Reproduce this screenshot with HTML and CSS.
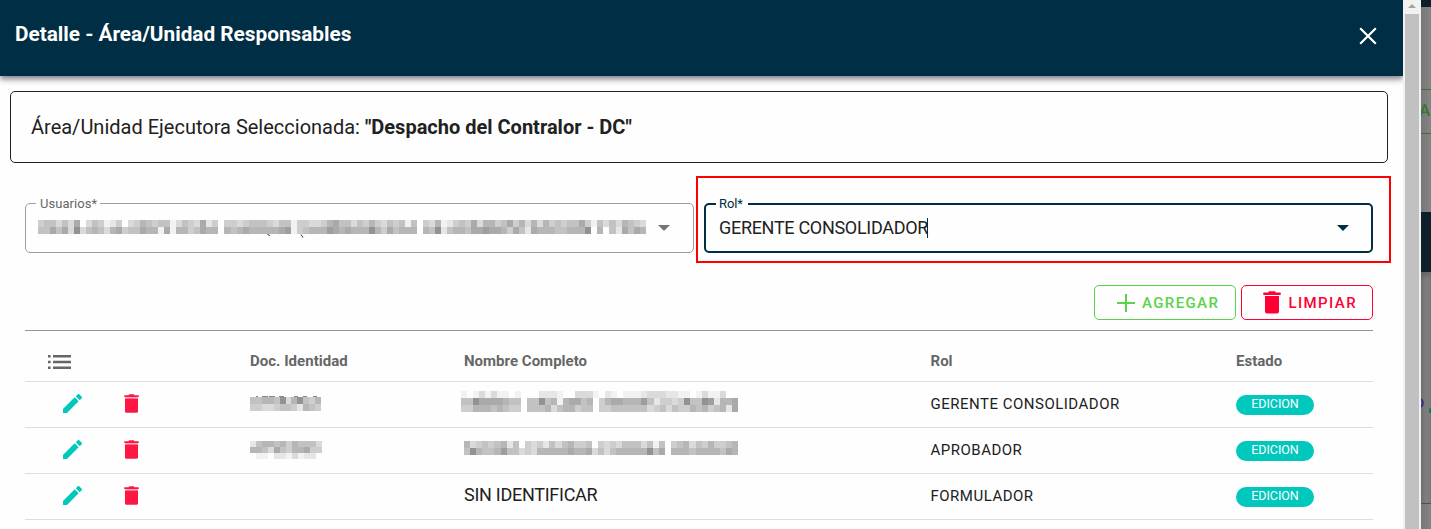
FILE: index.html
```html
<!DOCTYPE html>
<html lang="es">
<head>
<meta charset="utf-8">
<title>Detalle - Área/Unidad Responsables</title>
<link rel="stylesheet" href="styles.css">
</head>
<body>
<svg class="defs" width="0" height="0">
  <symbol id="trash" viewBox="0 0 15 19"><path d="M1 4.600h13v12.600q0 1.600-1.600 1.600H2.600Q1 18.800 1 17.200z"/><path d="M.3 1.200h4.200q.3-1 1.300-1h3.400q1 0 1.300 1h4.200v1.800H.3z"/><path d="M1 3h13v1.600H1z" opacity=".35"/></symbol>
  <symbol id="trash-solid" viewBox="0 0 18 23"><path d="M2 5h14v15.500q0 2-2 2H4q-2 0-2-2z"/><path d="M.3 1.500h4.700l1.200-1.200h5.600L13 1.500h4.700V4H.3z"/></symbol>
  <symbol id="pencil" viewBox="3 3 18 18"><path d="M3 17.250V21h3.750L17.810 9.940l-3.750-3.750L3 17.250zM20.710 7.040a1 1 0 0 0 0-1.410l-2.340-2.340a1 1 0 0 0-1.410 0l-1.830 1.830 3.750 3.750 1.830-1.830z"/></symbol>
</svg>
<div class="page">
  <main class="dialog">
    <header class="bar">
      <h1>Detalle - Área/Unidad Responsables</h1>
      <svg class="close" viewBox="0 0 18 18"><path d="M1.200 1.200l15.600 15.600M16.800 1.200L1.200 16.800"/></svg>
    </header>
    <section class="selected">Área/Unidad Ejecutora Seleccionada:&nbsp;<b>"Despacho del Contralor - DC"</b></section>
    <section class="fields">
      <div class="field">
        <label>Usuarios*</label>
        <div class="mosaic users" data-rows="45535370354124034654551354372404434555435514433467553546435451504361245473664574636364545574153536543,55757393565367455766171664576606567666667814566687676669647566606592566577877647527666556669060527576"></div>
        <svg class="tails" viewBox="0 0 38 4"><path d="M.5.500l2.500 1M34 .500l2 3"/></svg>
        <svg class="caret" viewBox="0 0 12 6"><path d="M0 0h12L6 6z"/></svg>
      </div>
      <div class="field active">
        <label>Rol*</label>
        <span class="value">GERENTE CONSOLIDADOR</span><i class="cursor"></i>
        <svg class="caret" viewBox="0 0 12 6"><path d="M0 0h12L6 6z"/></svg>
        <div class="highlight"></div>
      </div>
    </section>
    <section class="actions">
      <button class="add"><svg viewBox="0 0 18 18"><path d="M9 0v18M0 9h18"/></svg>AGREGAR</button>
      <button class="clear"><svg viewBox="0 0 18 23"><use href="#trash-solid"/></svg>LIMPIAR</button>
    </section>
    <section class="table">
      <div class="row head">
        <svg class="list" viewBox="0 0 23 14"><path d="M0 0h2.600v2.500H0zM5 0h18v2.500H5zM0 5.800h2.600v2.500H0zM5 5.800h18v2.500H5zM0 11.500h2.600V14H0zM5 11.500h18V14H5z"/></svg>
        <span>Doc. Identidad</span><span>Nombre Completo</span><span>Rol</span><span>Estado</span>
      </div>
      <div class="row">
        <span class="tools"><svg class="edit"><use href="#pencil"/></svg><svg class="delete"><use href="#trash"/></svg></span>
        <span class="cell"><span class="mosaic doc" data-rows="556659369546,443345542654"></span><svg class="tops" viewBox="0 0 71 1"><path d="M6 .5h2M12 .5h6M19 .5h6M29 .5h5M44 .5h4M53 .5h4M63 .5h4"/></svg></span>
        <span><span class="mosaic name first" data-rows="1013131101000222100333102101112333221101311300,5597777655055956167756046776668524434955982667,4466656544055563566455044555555345354465645627"></span></span>
        <span>GERENTE CONSOLIDADOR</span><span><em>EDICION</em></span>
      </div>
      <div class="row">
        <span class="tools"><svg class="edit"><use href="#pencil"/></svg><svg class="delete"><use href="#trash"/></svg></span>
        <span><span class="mosaic doc second" data-rows="256656465553,665375466744,011022131220"></span></span>
        <span><span class="mosaic name" data-rows="634545625043425356445043435553515045635464456,596556855343666667667353566666957066656666576"></span></span>
        <span>APROBADOR</span><span><em>EDICION</em></span>
      </div>
      <div class="row">
        <span class="tools"><svg class="edit"><use href="#pencil"/></svg><svg class="delete"><use href="#trash"/></svg></span>
        <span></span><span class="full">SIN IDENTIFICAR</span><span>FORMULADOR</span><span><em>EDICION</em></span>
      </div>
    </section>
  </main>
  <div class="scroll"><svg viewBox="0 0 8 4"><path d="M0 4l4-4 4 4z"/></svg><div class="thumb"></div></div>
  <aside class="behind">
    <div class="navy top"></div>
    <div class="upper"><div class="ghost">A</div></div>
    <div class="navy"></div>
    <div class="lower"><span class="purple">o</span><i class="dot"></i></div>
    <div class="rest"></div>
  </aside>
</div>
<script src="mosaic.js"></script>
</body>
</html>
```
FILE: styles.css
```css
* { box-sizing: border-box; }
body { margin: 0; height: 529px; overflow: hidden; background: #fff; color: #212121; font-family: Roboto, sans-serif; }
svg { display: block; fill: currentColor; }
.defs { position: absolute; }
.page { display: grid; grid-template-columns: 1403px 18px 10px; height: 529px; }
.dialog { height: 529px; overflow: hidden; background: #fefefe; }
.bar { height: 76px; background: #002e44; color: #fff; display: flex; justify-content: space-between; padding: 21px 26px 0 15px; box-shadow: 0 2px 4px -1px #0003, 0 4px 5px #0024, 0 1px 10px #0003; }
.bar h1 { margin: 0; font-size: 20.8px; line-height: 26px; font-weight: 700; letter-spacing: -.02px; }
.close { width: 18px; height: 18px; margin-top: 6px; fill: none; stroke: #fff; stroke-width: 2.2; }
.selected { margin: 15px 15px 0 10px; height: 72px; border: 1px solid #212121; border-radius: 5px; padding-left: 20px; display: flex; align-items: center; font-size: 20px; }
.fields { display: grid; grid-template-columns: 669px 669px; gap: 10px; margin: 40px 0 0 25px; height: 50px; }
.field { position: relative; display: flex; align-items: center; border: 1px solid #9e9e9e; border-radius: 5px; padding: 0 23px 0 12px; }
.field label { position: absolute; left: 10px; top: -8px; background: #fefefe; padding: 0 3px 0 4px; font-size: 13px; line-height: 15px; color: #666; letter-spacing: .04px; }
.field.active { border: 2px solid #002e44; padding-left: 13px; padding-right: 22px; }
.active label { color: #002e44; top: -9px; padding-right: 5px; padding-left: 3px; letter-spacing: -.1px; }
.value { font-size: 18px; letter-spacing: -.3px; line-height: 24px; }
.cursor { width: 1px; height: 20px; background: #002e44; margin-left: -1px; }
.caret { width: 12px; height: 6px; margin-left: auto; color: #757575; }
.active .caret { color: #002e44; }
.tails { position: absolute; left: 241px; top: 30px; width: 38px; height: 4px; fill: none; stroke: #333; }
.highlight { position: absolute; inset: -29px -20px -12px -10px; border: 2px solid #f00; }
.mosaic { display: grid; grid-auto-rows: 7px; }
.mosaic div { display: flex; }
.mosaic i { flex: 1; }
.users { width: 608px; margin-top: -2px; }
.cell { position: relative; }
.tops { position: absolute; left: 0; top: -1px; width: 71px; height: 1px; fill: none; stroke: #888; }
.doc { width: 71px; }
.doc.second { width: 72px; grid-auto-rows: 6.300px; margin-top: 1px; }
.name { width: 274px; margin-top: -3px; }
.name.first { width: 277px; margin: -5px 0 0 -3px; }
.actions { display: flex; justify-content: flex-end; gap: 5px; margin: 32px 30px 0 0; height: 35px; }
.actions button { display: flex; align-items: center; background: #fefefe; border: 1px solid; border-radius: 5px; padding: 0; font: 500 15px Roboto, sans-serif; letter-spacing: 1.38px; }
.add { width: 142px; color: #5bd24b; }
.add svg { width: 18px; height: 18px; stroke: currentColor; stroke-width: 2; margin: 0 7px 0 22px; }
.clear { width: 132px; color: #ff0035; }
.clear svg { width: 18px; height: 23px; margin: 0 7.500px 0 21px; }
.table { width: 1348px; margin: 10px 0 0 25px; border-top: 1px solid #949494; font-size: 15px; }
.row { display: grid; grid-template-columns: 225px 214px 466.500px 305.500px 1fr; align-items: center; height: 46px; padding-bottom: 2px; border-bottom: 1px solid #dedede; letter-spacing: .5px; }
.row.head { height: 51px; padding: 9px 0 0; font-weight: 700; color: #666; letter-spacing: .02px; }
.list { width: 23px; height: 14px; margin: 2px 0 0 23px; }
.tools { display: flex; align-items: center; padding-left: 38px; }
.edit { width: 19px; height: 19px; color: #00c8bd; }
.delete { width: 15px; height: 19px; margin-left: 42px; color: #ff1744; }
.full { font-size: 18px; letter-spacing: -.27px; margin-top: -2px; }
.row em { display: block; width: 78px; height: 20px; margin-top: 2px; border-radius: 10px; background: #00c8bd; color: #fff; text-align: center; font-style: normal; font-size: 12.500px; line-height: 18px; letter-spacing: -.05px; }
.scroll { background: #f1f1f1; padding: 4px 2px 0; display: flex; flex-direction: column; align-items: center; color: #a3a3a3; }
.scroll svg { width: 8px; height: 4px; margin-bottom: 6px; }
.thumb { width: 14px; flex: 1; background: #c1c1c1; }
.behind { overflow: hidden; background: linear-gradient(90deg, #777, #858585); }
.navy { height: 60px; background: #0d202a; }
.navy.top { height: 7px; }
.upper { height: 205px; padding-top: 82px; }
.ghost { height: 45px; border: solid #35752d; border-width: 1px 0; color: #35752d; font: 500 17px/41px Roboto, sans-serif; text-indent: -2px; }
.lower { height: 232px; border-bottom: 1px solid #515151; padding-top: 120px; display: flex; box-shadow: inset 0 4px 5px #0003; }
.purple { color: #292481; font-size: 18px; line-height: 20px; margin-left: -7px; }
.dot { width: 5px; height: 5px; margin: 16px 0 0 5px; background: #087c5e; border-radius: 3px 0 0 0; }
```
FILE: mosaic.js
```js
// Each digit is a tile's darkness, from 0 (blank) to 9.
document.querySelectorAll('.mosaic').forEach(function (box) {
  box.dataset.rows.split(',').forEach(function (row) {
    var line = document.createElement('div');
    row.split('').forEach(function (d) {
      var tile = document.createElement('i');
      var v = 254 - d * 12;
      tile.style.background = 'rgb(' + v + ',' + v + ',' + v + ')';
      line.appendChild(tile);
    });
    box.appendChild(line);
  });
});
```
